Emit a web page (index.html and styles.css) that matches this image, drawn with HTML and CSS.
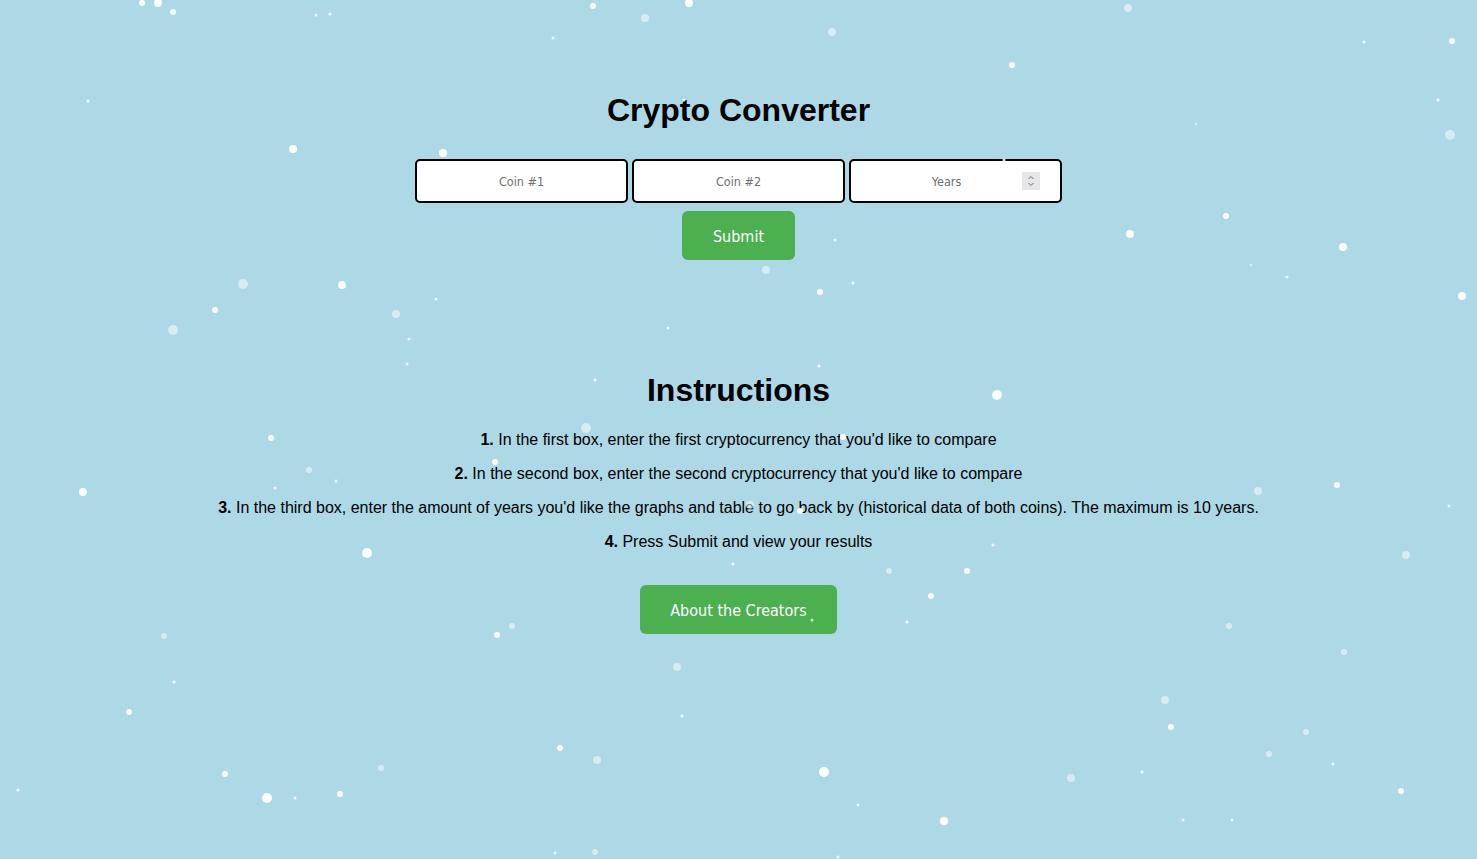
FILE: index.html
```html
<!DOCTYPE html>
<html>
<head>
<meta charset="utf-8">
<title>Crypto Converter</title>
<link rel="stylesheet" href="styles.css">
</head>
<body>
<div class="snow">
  <i class="f m" style="left:158px;top:3px"></i>
  <i class="f s" style="left:142px;top:3px"></i>
  <i class="f s" style="left:173px;top:12px"></i>
  <i class="f xs" style="left:316px;top:15px"></i>
  <i class="f xs" style="left:330px;top:14px"></i>
  <i class="f s" style="left:593px;top:6px"></i>
  <i class="f m" style="left:689px;top:3px"></i>
  <i class="f m dim" style="left:645px;top:18px"></i>
  <i class="f m dim" style="left:1128px;top:8px"></i>
  <i class="f m dim" style="left:832px;top:32px"></i>
  <i class="f s" style="left:1012px;top:65px"></i>
  <i class="f s" style="left:1452px;top:41px"></i>
  <i class="f xs" style="left:1364px;top:42px"></i>
  <i class="f xs" style="left:553px;top:38px"></i>
  <i class="f xs" style="left:88px;top:101px"></i>
  <i class="f m" style="left:293px;top:149px"></i>
  <i class="f m" style="left:443px;top:153px"></i>
  <i class="f l dim" style="left:1450px;top:135px"></i>
  <i class="f xs" style="left:1438px;top:100px"></i>
  <i class="f xs dim" style="left:1196px;top:124px"></i>
  <i class="f s" style="left:1226px;top:216px"></i>
  <i class="f m" style="left:1130px;top:234px"></i>
  <i class="f m" style="left:1343px;top:247px"></i>
  <i class="f xs" style="left:835px;top:240px"></i>
  <i class="f m dim" style="left:766px;top:270px"></i>
  <i class="f s" style="left:820px;top:292px"></i>
  <i class="f xs" style="left:853px;top:283px"></i>
  <i class="f m" style="left:342px;top:285px"></i>
  <i class="f l dim" style="left:243px;top:284px"></i>
  <i class="f s" style="left:215px;top:310px"></i>
  <i class="f xs" style="left:436px;top:299px"></i>
  <i class="f m dim" style="left:396px;top:314px"></i>
  <i class="f l dim" style="left:173px;top:330px"></i>
  <i class="f xs" style="left:409px;top:339px"></i>
  <i class="f xs" style="left:407px;top:364px"></i>
  <i class="f xs" style="left:668px;top:328px"></i>
  <i class="f m" style="left:1462px;top:296px"></i>
  <i class="f xs" style="left:1287px;top:277px"></i>
  <i class="f xs dim" style="left:1251px;top:265px"></i>
  <i class="f l" style="left:997px;top:395px"></i>
  <i class="f xs" style="left:819px;top:366px"></i>
  <i class="f xs" style="left:595px;top:380px"></i>
  <i class="f s" style="left:271px;top:438px"></i>
  <i class="f l dim" style="left:586px;top:428px"></i>
  <i class="f s" style="left:843px;top:437px"></i>
  <i class="f s" style="left:495px;top:462px"></i>
  <i class="f s dim" style="left:309px;top:470px"></i>
  <i class="f xs" style="left:336px;top:481px"></i>
  <i class="f xs" style="left:275px;top:488px"></i>
  <i class="f m" style="left:83px;top:492px"></i>
  <i class="f s" style="left:1337px;top:485px"></i>
  <i class="f m dim" style="left:1258px;top:491px"></i>
  <i class="f xs" style="left:1449px;top:506px"></i>
  <i class="f m dim" style="left:750px;top:505px"></i>
  <i class="f s" style="left:800px;top:511px"></i>
  <i class="f l" style="left:367px;top:553px"></i>
  <i class="f m dim" style="left:1406px;top:555px"></i>
  <i class="f xs" style="left:993px;top:545px"></i>
  <i class="f s dim" style="left:889px;top:571px"></i>
  <i class="f s" style="left:967px;top:571px"></i>
  <i class="f xs" style="left:733px;top:564px"></i>
  <i class="f s" style="left:931px;top:596px"></i>
  <i class="f s dim" style="left:1229px;top:626px"></i>
  <i class="f xs" style="left:907px;top:622px"></i>
  <i class="f s" style="left:497px;top:635px"></i>
  <i class="f s dim" style="left:512px;top:626px"></i>
  <i class="f s dim" style="left:164px;top:636px"></i>
  <i class="f s dim" style="left:1344px;top:652px"></i>
  <i class="f m dim" style="left:677px;top:667px"></i>
  <i class="f xs" style="left:174px;top:682px"></i>
  <i class="f s" style="left:129px;top:712px"></i>
  <i class="f xs" style="left:682px;top:716px"></i>
  <i class="f m dim" style="left:1165px;top:700px"></i>
  <i class="f s" style="left:1171px;top:727px"></i>
  <i class="f s dim" style="left:1306px;top:732px"></i>
  <i class="f s" style="left:560px;top:748px"></i>
  <i class="f s dim" style="left:1269px;top:754px"></i>
  <i class="f m dim" style="left:597px;top:760px"></i>
  <i class="f s" style="left:225px;top:774px"></i>
  <i class="f s dim" style="left:381px;top:768px"></i>
  <i class="f l" style="left:824px;top:772px"></i>
  <i class="f m dim" style="left:1071px;top:778px"></i>
  <i class="f xs" style="left:1333px;top:764px"></i>
  <i class="f xs" style="left:1142px;top:772px"></i>
  <i class="f s" style="left:340px;top:794px"></i>
  <i class="f l" style="left:267px;top:798px"></i>
  <i class="f xs" style="left:295px;top:798px"></i>
  <i class="f s" style="left:1401px;top:791px"></i>
  <i class="f xs" style="left:858px;top:805px"></i>
  <i class="f m" style="left:944px;top:821px"></i>
  <i class="f xs" style="left:1232px;top:820px"></i>
  <i class="f xs" style="left:1183px;top:820px"></i>
  <i class="f xs" style="left:555px;top:853px"></i>
  <i class="f s dim" style="left:595px;top:852px"></i>
  <i class="f xs" style="left:838px;top:857px"></i>
  <i class="f xs" style="left:18px;top:790px"></i>
  <i class="f xs" style="left:684px;top:100px"></i>
  <i class="f xs" style="left:1004px;top:160px"></i>
  <i class="f xs" style="left:812px;top:620px"></i>
</div>

<main class="page">
  <h1 class="title">Crypto Converter</h1>
  <form class="converter">
    <div class="fields">
      <div class="field"><span class="ph">Coin #1</span></div>
      <div class="field"><span class="ph">Coin #2</span></div>
      <div class="field field-num">
        <span class="ph">Years</span>
        <span class="spin">
          <svg width="10" height="14" viewBox="0 0 10 14"><path d="M2.5 5 L5 2.5 L7.5 5" fill="none" stroke="#6b6b6b" stroke-width="1"/><path d="M2.5 9 L5 11.5 L7.5 9" fill="none" stroke="#6b6b6b" stroke-width="1"/></svg>
        </span>
      </div>
    </div>
    <div class="btn btn-submit">Submit</div>
  </form>

  <section class="instructions">
    <h2 class="subtitle">Instructions</h2>
    <p><b>1.</b> In the first box, enter the first cryptocurrency that you'd like to compare</p>
    <p><b>2.</b> In the second box, enter the second cryptocurrency that you'd like to compare</p>
    <p><b>3.</b> In the third box, enter the amount of years you'd like the graphs and table to go back by (historical data of both coins). The maximum is 10 years.</p>
    <p><b>4.</b> Press Submit and view your results</p>
  </section>

  <div class="btn btn-about">About the Creators</div>
</main>
</body>
</html>
```

FILE: styles.css
```css
html, body {
  margin: 0;
  padding: 0;
  height: 100%;
}
body {
  background: #add8e6;
  font-family: "Liberation Sans", Arial, sans-serif;
  color: #000;
  overflow: hidden;
  position: relative;
}
.snow {
  position: absolute;
  inset: 0;
  pointer-events: none;
  z-index: 2;
}
.f {
  position: absolute;
  display: block;
  border-radius: 50%;
  background: #fff;
  transform: translate(-50%, -50%);
}
.f.xs { width: 3px; height: 3px; opacity: 0.9; }
.f.s { width: 6px; height: 6px; }
.f.m { width: 8px; height: 8px; }
.f.l { width: 10px; height: 10px; }
.f.dim { opacity: 0.5; }

.page {
  display: flex;
  flex-direction: column;
  align-items: center;
  padding-top: 92px;
}
.title {
  margin: 0;
  font-size: 32px;
  font-weight: bold;
  line-height: 36px;
}
.converter {
  display: flex;
  flex-direction: column;
  align-items: center;
  margin-top: 31px;
}
.fields {
  display: flex;
  gap: 4px;
}
.field {
  width: 209px;
  height: 40px;
  border: 2px solid #000;
  border-radius: 5px;
  background: #fff;
  display: flex;
  align-items: center;
  justify-content: center;
  position: relative;
}
.ph {
  font-family: "DejaVu Sans Condensed", "DejaVu Sans", sans-serif;
  font-size: 12.5px;
  color: #6f6f6f;
  padding-top: 0;
}
.field-num .ph {
  margin-right: 18px;
}
.spin {
  position: absolute;
  right: 20px;
  top: 11px;
  width: 18px;
  height: 18px;
  background: #e6e6ea;
  display: flex;
  align-items: center;
  justify-content: center;
}
.btn {
  background: #4caf50;
  color: #fff;
  border-radius: 6px;
  height: 49px;
  display: flex;
  align-items: center;
  justify-content: center;
  font-family: "DejaVu Sans Condensed", "DejaVu Sans", sans-serif;
  font-size: 16px;
  padding-top: 1px;
  box-sizing: border-box;
}
.btn-submit {
  width: 113px;
  margin-top: 8px;
}
.instructions {
  margin-top: 112px;
  text-align: center;
}
.subtitle {
  margin: 0 0 15px;
  font-size: 32px;
  font-weight: bold;
  line-height: 36px;
}
.instructions p {
  margin: 0;
  font-size: 16px;
  line-height: 34px;
}
.btn-about {
  width: 197px;
  margin-top: 26px;
}
```
